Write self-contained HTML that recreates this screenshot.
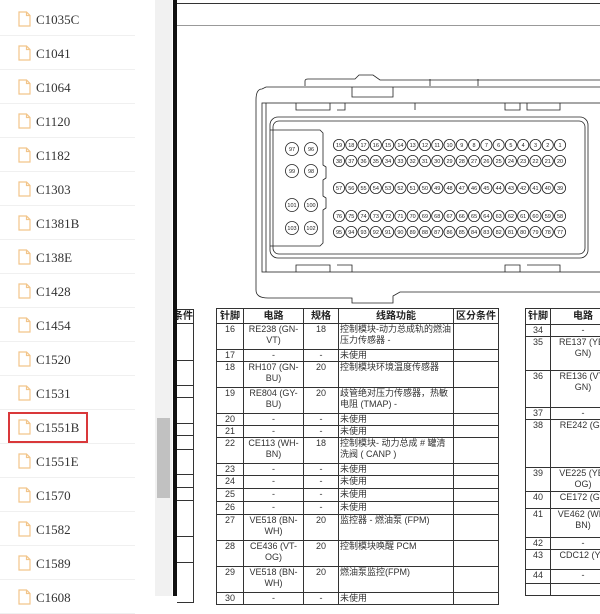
<!DOCTYPE html>
<html><head><meta charset="utf-8"><style>
*{margin:0;padding:0;box-sizing:border-box}
body{width:600px;height:596px;overflow:hidden;background:#fff;position:relative;font-family:"Liberation Sans","Noto Sans CJK SC",sans-serif}
.item{position:absolute;left:0;width:135px;height:34px;border-bottom:1px solid #f0f0f0}
.item .ic{position:absolute;left:18px;top:9px;width:13px;height:16px}
.item span{position:absolute;left:36px;top:10px;font:13px "Liberation Serif",serif;color:#333}
.hl{position:absolute;left:8px;top:412px;width:80px;height:31px;border:2px solid #d9383a}
.track{position:absolute;left:155px;top:0;width:17px;height:596px;background:#f1f1f1}
.thumb{position:absolute;left:157px;top:418px;width:13px;height:80px;background:#c1c1c1}
.bar{position:absolute;left:173px;top:0;width:4px;height:596px;background:#111}
table{position:absolute;border-collapse:collapse;table-layout:fixed;font-size:9px;color:#333}
td,th{border:1px solid #333;text-align:center;vertical-align:top;line-height:11px;padding:0 1px;overflow:hidden;white-space:nowrap}
th{font-weight:bold;font-size:10px;color:#222;vertical-align:middle}
td.l{text-align:left;white-space:normal}
</style></head><body>
<div id="list"></div>
<script>
var n=["C1035C","C1041","C1064","C1120","C1182","C1303","C1381B","C138E","C1428","C1454","C1520","C1531","C1551B","C1551E","C1570","C1582","C1589","C1608"];
var h="";for(var i=0;i<n.length;i++){h+='<div class="item" style="top:'+(2+34*i)+'px"><svg class="ic" viewBox="0 0 13 16"><path d="M1 1H8.5L12 4.5V15H1Z M8.5 1V4.5H12" fill="none" stroke="#f2c58a" stroke-width="1.2"/></svg><span>'+n[i]+'</span></div>';}
document.getElementById("list").innerHTML=h;
</script>
<div class="hl"></div>
<div class="track"></div><div class="thumb"></div><div class="bar"></div>
<div style="position:absolute;left:177px;top:3px;width:423px;height:1px;background:#333"></div>
<div style="position:absolute;left:177px;top:25px;width:423px;height:1px;background:#999"></div>
<svg style="position:absolute;left:0;top:0" width="600" height="305" viewBox="0 0 600 305" fill="none" stroke="#222" stroke-width="0.8" font-family="Liberation Sans" font-size="5.5">
<path d="M305,86 V81 Q305,79 308,79 H355 L359,75 H373 L380,80 H600 M430,79 V86 M478,79 V86"/>
<path d="M256,290 V100 Q256,89 262,89 L266,87 H600"/>
<path d="M352,87 V97 H393 V87"/>
<rect x="262" y="103" width="340" height="169"/>
<path d="M266,103 V272"/>
<path d="M296,103 V110 H330 V103 M337,110 H345 V103 M415,103 V110 M505,103 V110 H520 V103 M527,103 V110 H560 V103"/>
<rect x="270" y="117" width="318" height="141" rx="8"/>
<rect x="273" y="121" width="312" height="133" rx="6"/>
<path d="M270,130 H320 L323,133 V165 L326,167 V178 L323,180 V196 L326,198 V208 L323,210 V243 L320,246 H270"/>
<path d="M296,272 V265 H330 V272 M337,265 H352 V272 M505,272 V265 H520 V272 M527,265 H560 V272"/>
<path d="M256,290 Q256,298 268,298 H352 V303 H393 V296 L400,292 H600"/>
<g id="pins"></g>
</svg>
<script>
var g=document.getElementById("pins"),s="";
function pin(x,y,t,r){s+='<circle cx="'+x+'" cy="'+y+'" r="'+r+'"/><text x="'+x+'" y="'+(y+2)+'" text-anchor="middle" fill="#222" stroke="none">'+t+'</text>';}
var rows=[[145,19,1],[161,38,20],[188,57,39],[216,76,58],[232,95,77]];
rows.forEach(function(r){var c=0;for(var k=r[1];k>=r[2];k--){pin(339+c*12.28,r[0],k,5.6);c++;}});
pin(292,149,97,6.5);pin(311,149,96,6.5);pin(292,171,99,6.5);pin(311,171,98,6.5);
pin(292,205,101,6.5);pin(311,205,100,6.5);pin(292,228,103,6.5);pin(311,228,102,6.5);
g.innerHTML=s;
</script>
<table style="left:177px;top:309px;width:17px">
<tr><th style="height:14px;border-left:none;text-align:right;padding:0;white-space:nowrap;direction:rtl">条件</th></tr>
<tr><td style="height:37px;border-left:none"></td></tr><tr><td style="height:25px;border-left:none"></td></tr>
<tr><td style="height:12px;border-left:none"></td></tr><tr><td style="height:26px;border-left:none"></td></tr>
<tr><td style="height:12px;border-left:none"></td></tr><tr><td style="height:14px;border-left:none"></td></tr>
<tr><td style="height:25px;border-left:none"></td></tr><tr><td style="height:13px;border-left:none"></td></tr>
<tr><td style="height:13px;border-left:none"></td></tr><tr><td style="height:36px;border-left:none"></td></tr>
<tr><td style="height:26px;border-left:none"></td></tr><tr><td style="height:40px;border-left:none"></td></tr>
</table>
<table style="left:216px;top:308px;width:282px">
<colgroup><col style="width:27px"><col style="width:60px"><col style="width:35px"><col style="width:115px"><col style="width:45px"></colgroup>
<tr style="height:15px"><th>针脚</th><th>电路</th><th>规格</th><th>线路功能</th><th>区分条件</th></tr>
<tr style="height:26px"><td>16</td><td>RE238 (GN-<br>VT)</td><td>18</td><td class="l">控制模块-动力总成轨的燃油压力传感器 -</td><td></td></tr>
<tr style="height:12px"><td>17</td><td>-</td><td>-</td><td class="l">未使用</td><td></td></tr>
<tr style="height:26px"><td>18</td><td>RH107 (GN-<br>BU)</td><td>20</td><td class="l">控制模块环境温度传感器</td><td></td></tr>
<tr style="height:26px"><td>19</td><td>RE804 (GY-<br>BU)</td><td>20</td><td class="l">歧管绝对压力传感器，热敏电阻 (TMAP) -</td><td></td></tr>
<tr style="height:12px"><td>20</td><td>-</td><td>-</td><td class="l">未使用</td><td></td></tr>
<tr style="height:12px"><td>21</td><td>-</td><td>-</td><td class="l">未使用</td><td></td></tr>
<tr style="height:26px"><td>22</td><td>CE113 (WH-<br>BN)</td><td>18</td><td class="l">控制模块- 动力总成 # 罐清洗阀 ( CANP )</td><td></td></tr>
<tr style="height:12px"><td>23</td><td>-</td><td>-</td><td class="l">未使用</td><td></td></tr>
<tr style="height:13px"><td>24</td><td>-</td><td>-</td><td class="l">未使用</td><td></td></tr>
<tr style="height:13px"><td>25</td><td>-</td><td>-</td><td class="l">未使用</td><td></td></tr>
<tr style="height:13px"><td>26</td><td>-</td><td>-</td><td class="l">未使用</td><td></td></tr>
<tr style="height:26px"><td>27</td><td>VE518 (BN-<br>WH)</td><td>20</td><td class="l">监控器 - 燃油泵 (FPM)</td><td></td></tr>
<tr style="height:26px"><td>28</td><td>CE436 (VT-<br>OG)</td><td>20</td><td class="l">控制模块唤醒 PCM</td><td></td></tr>
<tr style="height:26px"><td>29</td><td>VE518 (BN-<br>WH)</td><td>20</td><td class="l">燃油泵监控(FPM)</td><td></td></tr>
<tr style="height:12px"><td>30</td><td>-</td><td>-</td><td class="l">未使用</td><td></td></tr>
</table>
<table style="left:525px;top:308px;width:90px">
<colgroup><col style="width:25px"><col style="width:65px"></colgroup>
<tr style="height:16px"><th>针脚</th><th>电路</th></tr>
<tr style="height:11px"><td>34</td><td>-</td></tr>
<tr style="height:34px"><td>35</td><td>RE137 (YE-<br>GN)</td></tr>
<tr style="height:37px"><td>36</td><td>RE136 (VT-<br>GN)</td></tr>
<tr style="height:11px"><td>37</td><td>-</td></tr>
<tr style="height:48px"><td>38</td><td>RE242 (GN</td></tr>
<tr style="height:24px"><td>39</td><td>VE225 (YE-<br>OG)</td></tr>
<tr style="height:17px"><td>40</td><td>CE172 (GN</td></tr>
<tr style="height:29px"><td>41</td><td>VE462 (WH-<br>BN)</td></tr>
<tr style="height:11px"><td>42</td><td>-</td></tr>
<tr style="height:20px"><td>43</td><td>CDC12 (YE</td></tr>
<tr style="height:14px"><td>44</td><td>-</td></tr>
<tr style="height:12px"><td></td><td></td></tr>
</table>
</body></html>
